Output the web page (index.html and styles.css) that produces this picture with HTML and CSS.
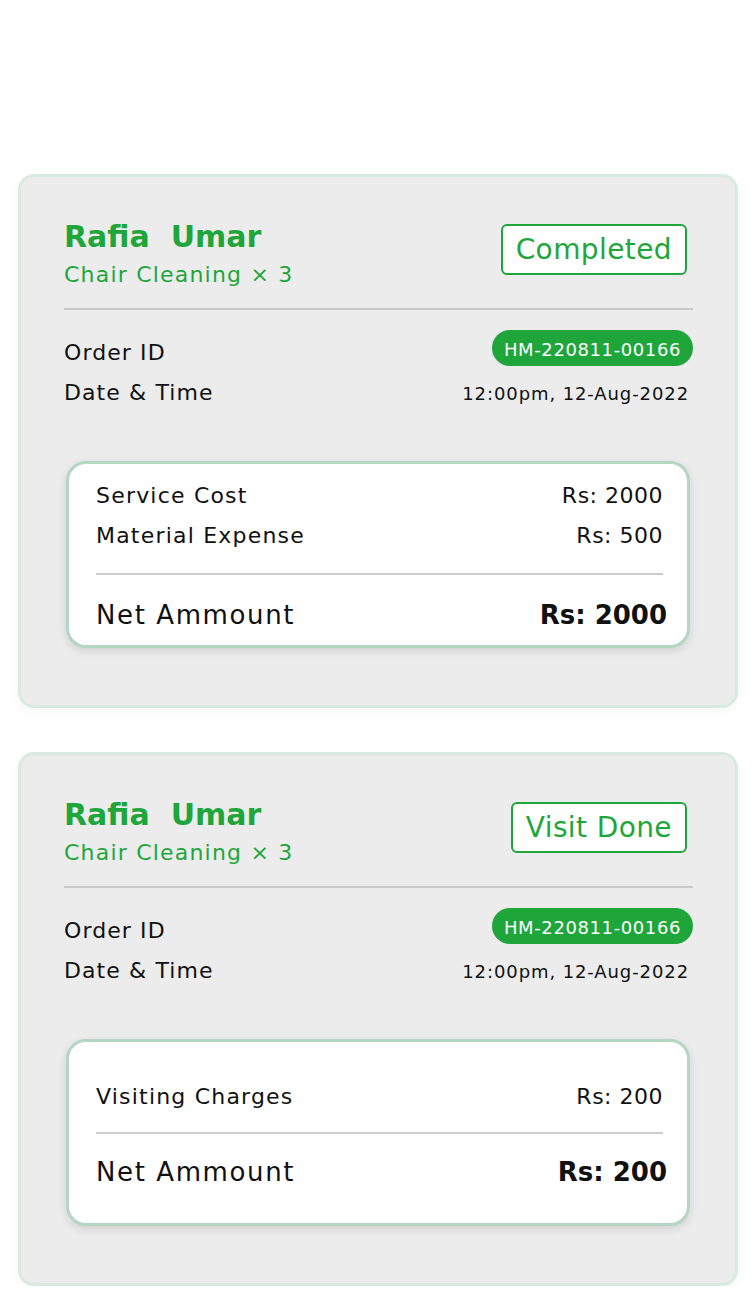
FILE: index.html
```html
<!DOCTYPE html>
<html>
<head>
<meta charset="utf-8">
<link rel="stylesheet" href="styles.css">
</head>
<body>
<div class="list">
  <div class="card">
    <div class="head">
      <div class="who">
        <div class="name">Rafia&nbsp; Umar</div>
        <div class="service">Chair Cleaning × 3</div>
      </div>
      <div class="status">Completed</div>
    </div>
    <div class="rule"></div>
    <div class="meta">
      <div class="meta-row id-row"><span class="label">Order ID</span><span class="pill">HM-220811-00166</span></div>
      <div class="meta-row"><span class="label">Date &amp; Time</span><span class="date">12:00pm, 12-Aug-2022</span></div>
    </div>
    <div class="bill">
      <div class="lines">
        <div class="line"><span>Service Cost</span><span class="val">Rs: 2000</span></div>
        <div class="line"><span>Material Expense</span><span class="val">Rs: 500</span></div>
      </div>
      <div class="bill-rule"></div>
      <div class="total"><span>Net Ammount</span><span class="amt">Rs: 2000</span></div>
    </div>
  </div>

  <div class="card">
    <div class="head">
      <div class="who">
        <div class="name">Rafia&nbsp; Umar</div>
        <div class="service">Chair Cleaning × 3</div>
      </div>
      <div class="status">Visit Done</div>
    </div>
    <div class="rule"></div>
    <div class="meta">
      <div class="meta-row id-row"><span class="label">Order ID</span><span class="pill">HM-220811-00166</span></div>
      <div class="meta-row"><span class="label">Date &amp; Time</span><span class="date">12:00pm, 12-Aug-2022</span></div>
    </div>
    <div class="bill single">
      <div class="lines">
        <div class="line"><span>Visiting Charges</span><span class="val">Rs: 200</span></div>
      </div>
      <div class="bill-rule"></div>
      <div class="total"><span>Net Ammount</span><span class="amt">Rs: 200</span></div>
    </div>
  </div>
</div>
</body>
</html>
```

FILE: styles.css
```css
* { box-sizing: border-box; }
html, body { margin: 0; padding: 0; background: #ffffff; }
body {
  font-family: "DejaVu Sans", "Noto Sans", sans-serif;
  color: #111111;
  width: 756px;
}
.list {
  padding: 174px 18px 0 18px;
  display: flex;
  flex-direction: column;
  gap: 44px;
}
.card {
  height: 534px;
  background: #ececec;
  border: 3px solid #d9ebe0;
  border-radius: 16px;
  box-shadow: 0 4px 10px rgba(0,0,0,0.04);
  padding: 42px 42px 0 43px;
  display: flex;
  flex-direction: column;
}
.head {
  display: flex;
  justify-content: space-between;
  align-items: flex-start;
}
.name {
  font-size: 30px;
  line-height: 36px;
  font-weight: 700;
  color: #1ea63a;
}
.service {
  margin-top: 5px;
  font-size: 22px;
  line-height: 30px;
  letter-spacing: 1.2px;
  color: #1ea63a;
}
.status {
  margin-top: 5px;
  margin-right: 6px;
  height: 51px;
  padding: 0 13px;
  display: flex;
  align-items: center;
  border: 2px solid #1ea63a;
  border-radius: 6px;
  background: #ffffff;
  color: #1ea63a;
  font-size: 28px;
  letter-spacing: 0.4px;
}
.rule {
  margin-top: 18px;
  height: 2px;
  background: #c9c9c9;
}
.meta {
  margin-top: 20px;
  display: flex;
  flex-direction: column;
  gap: 12px;
}
.meta-row {
  display: flex;
  justify-content: space-between;
  align-items: center;
}
.meta-row.id-row {
  height: 36px;
  align-items: flex-start;
}
.id-row .label { margin-top: 8px; }
.label {
  font-size: 22px;
  line-height: 30px;
  letter-spacing: 1.1px;
}
.pill {
  height: 36px;
  padding: 3px 12px 0;
  display: flex;
  align-items: center;
  border-radius: 18px;
  background: #1ea63a;
  color: #ffffff;
  font-size: 18px;
  letter-spacing: 0.6px;
}
.date {
  font-size: 18px;
  letter-spacing: 0.9px;
  margin-right: 4px;
}
.bill {
  margin: 53px 3px 0 2px;
  height: 187px;
  background: #ffffff;
  border: 3px solid #b5d6c3;
  border-radius: 20px;
  box-shadow: 0 3px 8px rgba(0,0,0,0.12);
  padding: 4px 24px 0 27px;
  display: flex;
  flex-direction: column;
  justify-content: center;
}
.lines {
  display: flex;
  flex-direction: column;
  gap: 10px;
}
.line {
  display: flex;
  justify-content: space-between;
  font-size: 22px;
  line-height: 30px;
  letter-spacing: 1.2px;
}
.line .val { letter-spacing: 0.5px; }
.bill-rule {
  margin: 22px 0 23.6px;
  height: 2px;
  background: #cccccc;
}
.single .lines { margin-top: 2px; }
.single .bill-rule { margin: 20px 0 21px; }
.total {
  display: flex;
  justify-content: space-between;
  font-size: 26px;
  line-height: 34px;
  letter-spacing: 1.6px;
}
.amt { font-weight: 700; letter-spacing: 0; margin-right: -4px; }
```
